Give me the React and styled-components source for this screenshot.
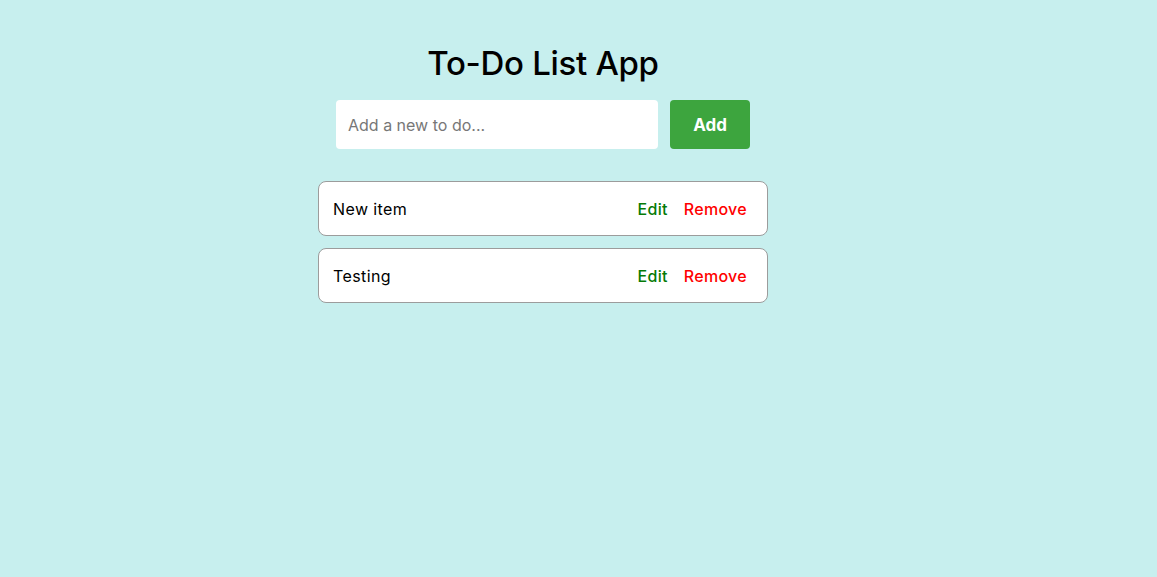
import React, { useState } from 'react'
import styled, { createGlobalStyle } from 'styled-components'

const GlobalStyle = createGlobalStyle`
  html, body {
    margin: 0;
    padding: 0;
    background-color: #c7efee;
    font-family: Inter, 'Noto Sans', sans-serif;
  }
`

const Page = styled.div`
  min-height: 577px;
  box-sizing: border-box;
  padding: 40px 71px 0 0;
  display: flex;
  flex-direction: column;
  align-items: center;
`

const Title = styled.h1`
  margin: 0 0 14px;
  font-size: 33px;
  font-weight: 500;
  color: #000;
  line-height: 46px;
  letter-spacing: -0.3px;
`

const Form = styled.form`
  display: flex;
  gap: 12px;
  margin-bottom: 32px;
`

const Input = styled.input`
  width: 322px;
  height: 49px;
  box-sizing: border-box;
  border: none;
  border-radius: 4px;
  padding: 0 12px;
  font-family: inherit;
  font-size: 16px;
  background: #fff;
  outline: none;

  &::placeholder {
    color: #777;
  }
`

const AddButton = styled.button`
  width: 80px;
  height: 49px;
  border: none;
  border-radius: 4px;
  background-color: #3da53e;
  color: #fff;
  font-family: inherit;
  font-size: 17px;
  font-weight: 700;
  cursor: pointer;
`

const List = styled.ul`
  list-style: none;
  margin: 0;
  padding: 0;
  width: 450px;
  display: flex;
  flex-direction: column;
  gap: 12px;
`

const Item = styled.li`
  height: 55px;
  box-sizing: border-box;
  display: flex;
  align-items: center;
  justify-content: space-between;
  padding: 0 20px 0 14px;
  background: #fff;
  border: 1px solid #9c9c9c;
  border-radius: 8px;
  font-size: 16px;
  letter-spacing: 0.4px;
  color: #000;
`

const Actions = styled.div`
  display: flex;
  gap: 16px;
`

const ActionButton = styled.button`
  border: none;
  background: none;
  padding: 0;
  font-family: inherit;
  font-size: 16px;
  font-weight: 500;
  letter-spacing: 0.3px;
  color: ${({ $danger }) => ($danger ? '#ff0000' : '#067a06')};
  cursor: pointer;
`

export default function App() {
  const [items, setItems] = useState(['New item', 'Testing'])
  const [text, setText] = useState('')

  const add = (e) => {
    e.preventDefault()
    if (!text.trim()) return
    setItems([...items, text.trim()])
    setText('')
  }

  return (
    <>
      <GlobalStyle />
      <Page>
        <Title>To-Do List App</Title>
        <Form onSubmit={add}>
          <Input
            placeholder="Add a new to do..."
            value={text}
            onChange={(e) => setText(e.target.value)}
          />
          <AddButton type="submit">Add</AddButton>
        </Form>
        <List>
          {items.map((item, i) => (
            <Item key={i}>
              <span>{item}</span>
              <Actions>
                <ActionButton>Edit</ActionButton>
                <ActionButton $danger onClick={() => setItems(items.filter((_, j) => j !== i))}>
                  Remove
                </ActionButton>
              </Actions>
            </Item>
          ))}
        </List>
      </Page>
    </>
  )
}
